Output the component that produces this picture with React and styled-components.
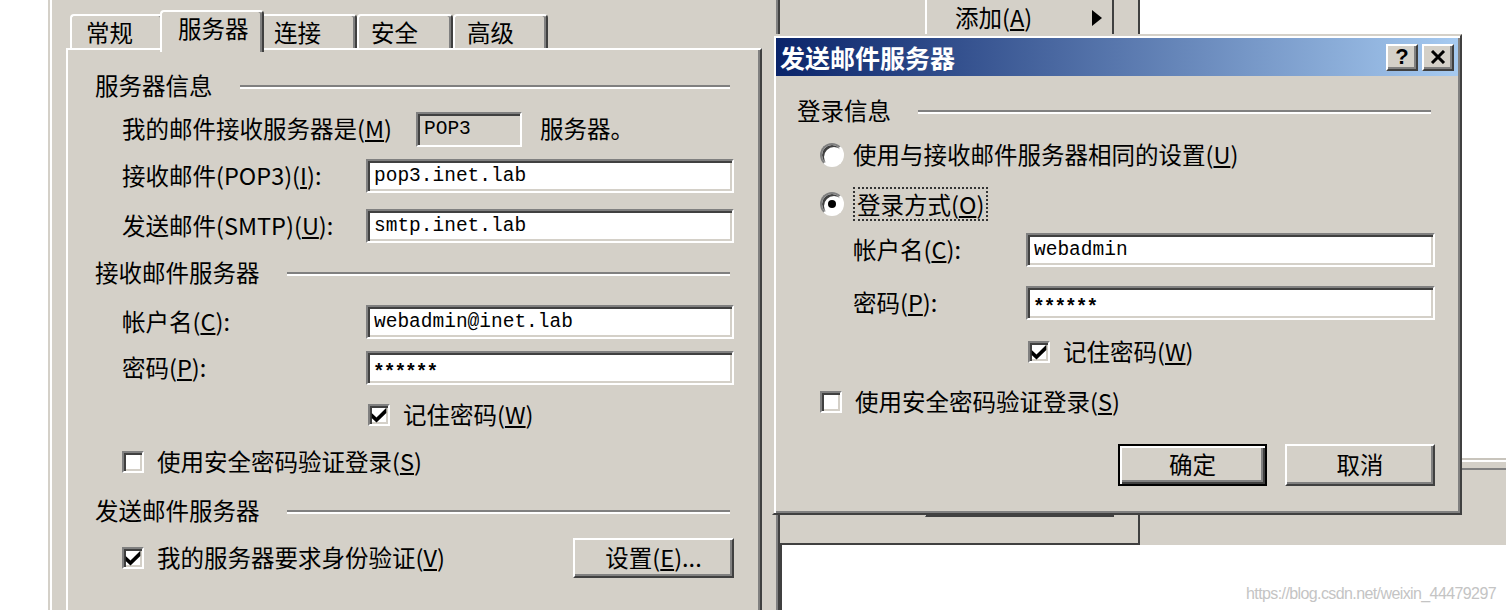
import React from "react";
import styled, { createGlobalStyle, css } from "styled-components";

const FACE = "#d4d0c8";
const SHADOW = "#808080";
const DARK = "#404040";

const GlobalStyle = createGlobalStyle`
  html, body {
    margin: 0;
    padding: 0;
    background: #fff;
  }
  body {
    font-family: "Noto Sans CJK SC", "Noto Sans", sans-serif;
  }
`;

// bevels
const raised = css`
  border: 2px solid;
  border-color: #fff ${DARK} ${DARK} #fff;
  box-shadow: inset -2px -2px ${SHADOW};
`;

const sunken = css`
  border: 2px solid;
  border-color: ${SHADOW} #fff #fff ${SHADOW};
  box-shadow: inset 2px 2px ${DARK}, inset -2px -2px ${FACE};
`;

const Desktop = styled.div`
  position: relative;
  width: 1506px;
  height: 610px;
  overflow: hidden;
  background: #fff;
  color: #000;
  font-size: 23.5px;
  line-height: 1;
`;

/* ---------- property sheet (left window) ---------- */

const PropWindow = styled.div`
  position: absolute;
  left: 48px;
  top: 0;
  width: 732px;
  height: 640px;
  box-sizing: border-box;
  background: ${FACE};
  border-left: 2px solid ${FACE};
  border-right: 2px solid ${DARK};
  box-shadow: inset 2px 0 #fff, inset -2px 0 ${SHADOW};
  padding: 10px 16px 0 16px;
  display: flex;
  flex-direction: column;
`;

const TabStrip = styled.div`
  display: flex;
  align-items: flex-end;
  height: 38px;
  padding-left: 4px;
  position: relative;
  z-index: 2;
`;

const Tab = styled.div`
  box-sizing: border-box;
  width: ${(p) => p.$w}px;
  height: ${(p) => (p.$active ? 42 : 34)}px;
  margin: 0 ${(p) => (p.$active ? -4 : 0)}px ${(p) => (p.$active ? -4 : 0)}px;
  padding: ${(p) => (p.$active ? "0 0 6px 16px" : `2px 0 0 ${p.$pl || 12}px`)};
  display: flex;
  align-items: center;
  background: ${FACE};
  border-top: 2px solid #fff;
  border-left: 2px solid #fff;
  border-right: 2px solid ${DARK};
  border-radius: 4px 4px 0 0;
  box-shadow: inset -2px 0 ${SHADOW};
  position: relative;
  z-index: ${(p) => (p.$active ? 3 : 1)};
`;

const Panel = styled.div`
  flex: 1;
  position: relative;
  z-index: 1;
  border: 2px solid;
  border-color: #fff ${DARK} ${DARK} #fff;
  box-shadow: inset -2px 0 ${SHADOW};
  padding: 0 26px 0 27px;
  display: flex;
  flex-direction: column;
`;

/* ---------- shared form parts ---------- */

const GroupHeader = styled.div`
  display: flex;
  align-items: center;
  gap: 27px;
  height: 36px;
  margin-top: ${(p) => p.$mt}px;
  white-space: nowrap;

  &::after {
    content: "";
    flex: 1;
    margin: 2px 4px 0 0;
    border-top: 2px solid ${SHADOW};
    border-bottom: 2px solid #fff;
  }
`;

const Row = styled.div`
  display: flex;
  align-items: center;
  height: ${(p) => p.$h}px;
  margin-top: ${(p) => p.$mt}px;
  padding-left: ${(p) => p.$indent || 0}px;
  justify-content: ${(p) => p.$justify || "flex-start"};
  gap: ${(p) => p.$gap || 0}px;
  white-space: nowrap;
`;

const Label = styled.span`
  width: ${(p) => p.$w}px;
  flex: none;
`;

const Key = styled.span`
  text-decoration: underline;
  text-underline-offset: 2px;
`;

const Field = styled.input`
  box-sizing: border-box;
  width: ${(p) => p.$w}px;
  height: ${(p) => p.$h || 34}px;
  margin: 0;
  padding: ${(p) => (p.$secret ? "9px 0 0 5px" : "0 0 0 6px")};
  ${sunken};
  background: ${(p) => (p.$readOnly ? FACE : "#fff")};
  color: #000;
  font-family: "Liberation Mono", "DejaVu Sans Mono", monospace;
  font-size: 19.5px;
  font-weight: ${(p) => (p.$secret ? "bold" : "normal")};
  letter-spacing: ${(p) => (p.$secret ? "-1px" : "0")};
  outline: none;
`;

const Trailing = styled.span`
  margin-left: 18px;
`;

const Box = styled.span`
  box-sizing: border-box;
  width: 22px;
  height: 22px;
  flex: none;
  ${sunken};
  background: #fff;
  display: inline-flex;
  align-items: center;
  justify-content: center;
`;

const Check = styled.label`
  display: inline-flex;
  align-items: center;
  gap: 13px;
`;

const RadioDot = styled.span`
  box-sizing: border-box;
  width: 24px;
  height: 24px;
  flex: none;
  border-radius: 50%;
  border: 2px solid;
  border-color: ${SHADOW} #fff #fff ${SHADOW};
  box-shadow: inset 2px 2px ${DARK};
  background: #fff;
  display: inline-flex;
  align-items: center;
  justify-content: center;

  &::after {
    content: "";
    display: ${(p) => (p.$on ? "block" : "none")};
    width: 8px;
    height: 8px;
    border-radius: 50%;
    background: #000;
  }
`;

const Radio = styled.label`
  display: inline-flex;
  align-items: center;
  gap: 9px;
`;

const Focus = styled.span`
  padding: 4px 2px 3px;
  border: 2px dotted #333;
`;

const Button = styled.button`
  box-sizing: border-box;
  width: ${(p) => p.$w}px;
  height: ${(p) => p.$h}px;
  padding: 0;
  margin: 0;
  background: ${FACE};
  color: #000;
  font: inherit;
  line-height: 1;
  ${(p) =>
    p.$default
      ? css`
          border: 2px solid #000;
          box-shadow: inset 2px 2px #fff, inset -2px -2px ${DARK},
            inset -4px -4px ${SHADOW};
        `
      : raised};
`;

const CheckMark = () => (
  <svg width="16" height="16" viewBox="0 0 7 7">
    <polygon points="0.3,2.6 2.4,4.6 6.7,0.3 6.7,2.6 2.4,6.8 0.3,4.8" fill="#000" />
  </svg>
);

const CheckBox = ({ checked, children }) => (
  <Check>
    <Box>{checked && <CheckMark />}</Box>
    <span>{children}</span>
  </Check>
);

/* ---------- dialog ---------- */

const Dialog = styled.div`
  position: absolute;
  left: 772px;
  top: 34px;
  width: 690px;
  height: 481px;
  box-sizing: border-box;
  z-index: 5;
  background: ${FACE};
  border: 2px solid;
  border-color: ${FACE} ${DARK} ${DARK} ${FACE};
  box-shadow: inset 2px 2px #fff, inset -2px -2px ${SHADOW};
  padding: 2px;
  display: flex;
  flex-direction: column;
`;

const TitleBar = styled.div`
  height: 38px;
  flex: none;
  display: flex;
  align-items: center;
  justify-content: space-between;
  padding: 0 4px;
  background: linear-gradient(to right, #0a246a, #a6caf0);
  color: #fff;
  font-weight: bold;
  font-size: 25px;
`;

const TitleButtons = styled.div`
  display: flex;
  gap: 4px;
`;

const TitleButton = styled.span`
  box-sizing: border-box;
  width: 32px;
  height: 27px;
  ${raised};
  background: ${FACE};
  color: #000;
  display: flex;
  align-items: center;
  justify-content: center;
  font-family: "Liberation Sans", Arial, sans-serif;
  font-size: 22px;
  font-weight: bold;
`;

const DialogBody = styled.div`
  display: flex;
  flex-direction: column;
  padding: 0 23px 0 21px;
`;

/* ---------- window behind the dialog ---------- */

const BackWindow = styled.div`
  position: absolute;
  left: 780px;
  top: 0;
  width: 726px;
  height: 610px;
  display: grid;
  grid-template-columns: 360px 1fr;
  grid-template-rows: 545px 1fr;
`;

const GrayPane = styled.div`
  box-sizing: border-box;
  background: ${FACE};
  border-right: 2px solid ${DARK};
  border-bottom: 2px solid ${DARK};
  padding-left: 145px;
`;

const MenuColumn = styled.div`
  box-sizing: border-box;
  width: 189px;
  height: 517px;
  border-left: 2px solid #fff;
  border-right: 2px solid ${DARK};
  border-bottom: 4px solid ${DARK};
`;

const MenuItem = styled.div`
  height: 35px;
  display: flex;
  align-items: center;
  justify-content: space-between;
  padding: 0 10px 0 28px;
`;

const Arrow = styled.span`
  width: 0;
  height: 0;
  border-top: 8px solid transparent;
  border-bottom: 8px solid transparent;
  border-left: 10px solid #000;
`;

const WhitePane = styled.div`
  display: flex;
  flex-direction: column;
  background: #fff;
`;

const StatusStrip = styled.div`
  margin-top: auto;
  height: 87px;
  box-sizing: border-box;
  background: ${FACE};
  border-top: 2px solid #c8c4bc;
  box-shadow: inset 0 2px #fff;

  &::before {
    content: "";
    display: block;
    height: 8px;
    border-bottom: 2px solid ${SHADOW};
  }
`;

const ListArea = styled.div`
  grid-column: 1 / span 2;
  background: #fff;
  border-left: 2px solid ${DARK};
`;

const Watermark = styled.div`
  position: absolute;
  right: 10px;
  bottom: 8px;
  z-index: 6;
  color: #c4c4c4;
  font-family: "Liberation Sans", Arial, sans-serif;
  font-size: 16px;
  letter-spacing: -0.6px;
`;

export default function App() {
  return (
    <>
      <GlobalStyle />
      <Desktop>
        <PropWindow>
          <TabStrip>
            <Tab $w={94} $pl={14}>常规</Tab>
            <Tab $w={104} $active>服务器</Tab>
            <Tab $w={97}>连接</Tab>
            <Tab $w={96}>安全</Tab>
            <Tab $w={95}>高级</Tab>
          </TabStrip>
          <Panel>
            <GroupHeader $mt={18}>服务器信息</GroupHeader>
            <Row $h={36} $mt={7} $indent={27}>
              <Label $w={294}>
                我的邮件接收服务器是(<Key>M</Key>)
              </Label>
              <Field $w={106} $h={35} $readOnly readOnly value="POP3" />
              <Trailing>服务器。</Trailing>
            </Row>
            <Row $h={34} $mt={12} $indent={27}>
              <Label $w={244}>
                接收邮件(POP3)(<Key>I</Key>):
              </Label>
              <Field $w={368} readOnly value="pop3.inet.lab" />
            </Row>
            <Row $h={34} $mt={16} $indent={27}>
              <Label $w={244}>
                发送邮件(SMTP)(<Key>U</Key>):
              </Label>
              <Field $w={368} readOnly value="smtp.inet.lab" />
            </Row>

            <GroupHeader $mt={12}>接收邮件服务器</GroupHeader>
            <Row $h={34} $mt={14} $indent={27}>
              <Label $w={244}>
                帐户名(<Key>C</Key>):
              </Label>
              <Field $w={368} readOnly value="webadmin@inet.lab" />
            </Row>
            <Row $h={34} $mt={12} $indent={27}>
              <Label $w={244}>
                密码(<Key>P</Key>):
              </Label>
              <Field $w={368} $secret readOnly value="******" />
            </Row>
            <Row $h={34} $mt={13} $indent={273}>
              <CheckBox checked>
                记住密码(<Key>W</Key>)
              </CheckBox>
            </Row>
            <Row $h={34} $mt={13} $indent={27}>
              <CheckBox>
                使用安全密码验证登录(<Key>S</Key>)
              </CheckBox>
            </Row>

            <GroupHeader $mt={14}>发送邮件服务器</GroupHeader>
            <Row $h={40} $mt={9} $indent={27} $justify="space-between">
              <CheckBox checked>
                我的服务器要求身份验证(<Key>V</Key>)
              </CheckBox>
              <Button $w={161} $h={40}>
                设置(<Key>E</Key>)...
              </Button>
            </Row>
          </Panel>
        </PropWindow>

        <BackWindow>
          <GrayPane>
            <MenuColumn>
              <MenuItem>
                <span>
                  添加(<Key>A</Key>)
                </span>
                <Arrow />
              </MenuItem>
            </MenuColumn>
          </GrayPane>
          <WhitePane>
            <StatusStrip />
          </WhitePane>
          <ListArea />
        </BackWindow>

        <Dialog>
          <TitleBar>
            <span>发送邮件服务器</span>
            <TitleButtons>
              <TitleButton>?</TitleButton>
              <TitleButton>
                <svg width="16" height="14" viewBox="0 0 16 14">
                  <path d="M2 1 L14 13 M14 1 L2 13" stroke="#000" strokeWidth="3" />
                </svg>
              </TitleButton>
            </TitleButtons>
          </TitleBar>
          <DialogBody>
            <GroupHeader $mt={17}>登录信息</GroupHeader>
            <Row $h={34} $mt={9} $indent={23}>
              <Radio>
                <RadioDot />
                <span>
                  使用与接收邮件服务器相同的设置(<Key>U</Key>)
                </span>
              </Radio>
            </Row>
            <Row $h={34} $mt={15} $indent={23}>
              <Radio>
                <RadioDot $on />
                <Focus>
                  登录方式(<Key>O</Key>)
                </Focus>
              </Radio>
            </Row>
            <Row $h={34} $mt={12} $indent={56}>
              <Label $w={173}>
                帐户名(<Key>C</Key>):
              </Label>
              <Field $w={410} readOnly value="webadmin" />
            </Row>
            <Row $h={34} $mt={19} $indent={56}>
              <Label $w={173}>
                密码(<Key>P</Key>):
              </Label>
              <Field $w={410} $secret readOnly value="******" />
            </Row>
            <Row $h={34} $mt={15} $indent={231}>
              <CheckBox checked>
                记住密码(<Key>W</Key>)
              </CheckBox>
            </Row>
            <Row $h={34} $mt={16} $indent={23}>
              <CheckBox>
                使用安全密码验证登录(<Key>S</Key>)
              </CheckBox>
            </Row>
            <Row $h={42} $mt={25} $justify="flex-end" $gap={18}>
              <Button $w={149} $h={42} $default>
                确定
              </Button>
              <Button $w={150} $h={42}>
                取消
              </Button>
            </Row>
          </DialogBody>
        </Dialog>

        <Watermark>https://blog.csdn.net/weixin_44479297</Watermark>
      </Desktop>
    </>
  );
}
